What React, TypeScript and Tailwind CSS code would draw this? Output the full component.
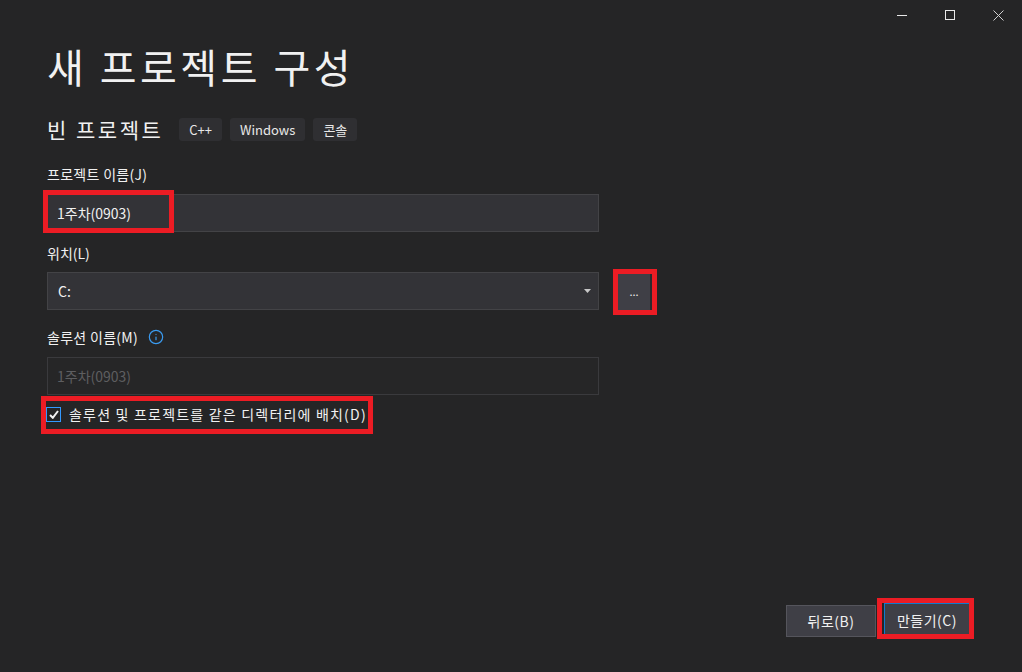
import { Info } from "lucide-react";

const font = "font-['Noto_Sans_CJK_KR','Noto_Sans',sans-serif]";

function RedBox({ className }: { className: string }) {
  return <div className={`absolute border-[5px] border-[#ec1c24] pointer-events-none ${className}`} />;
}

function Chip({ children }: { children: React.ReactNode }) {
  return (
    <span className="h-[23px] px-[10px] flex items-center rounded-[3px] bg-[#2f2f32] text-[13px] text-[#e8e8e8]">
      {children}
    </span>
  );
}

export default function App() {
  return (
    <div className={`relative w-[1022px] h-[672px] bg-[#252526] text-[#f1f1f1] flex flex-col overflow-hidden ${font}`}>
      {/* title bar */}
      <div className="h-[32px] flex justify-end items-start">
        <div className="w-[48px] h-[30px] flex items-center justify-center">
          <div className="w-[10px] h-px bg-[#e8e8e8]" />
        </div>
        <div className="w-[48px] h-[30px] flex items-center justify-center">
          <div className="w-[10px] h-[10px] border border-[#e8e8e8]" />
        </div>
        <div className="w-[48px] h-[30px] flex items-center justify-center">
          <svg width="11" height="11" viewBox="0 0 11 11" stroke="#d0d0d0" strokeWidth="1">
            <path d="M0.5 0.5 L10.5 10.5 M10.5 0.5 L0.5 10.5" />
          </svg>
        </div>
      </div>

      <div className="pl-[47px] flex flex-col">
        <h1 className="text-[40px] leading-none mt-[14px] tracking-[3.5px]">새 프로젝트 구성</h1>

        <div className="flex items-center mt-[32px] h-[23px]">
          <span className="text-[21px] leading-none mr-[16px] tracking-[2.5px]">빈 프로젝트</span>
          <div className="flex gap-[8px]">
            <Chip>C++</Chip>
            <Chip>Windows</Chip>
            <Chip>콘솔</Chip>
          </div>
        </div>

        <label className="text-[14px] leading-none mt-[26px] tracking-[0.3px]">프로젝트 이름(J)</label>
        <div className="relative mt-[13px] w-[552px]">
          <div className="h-[38px] border border-[#434346] bg-[#333337] flex items-center px-[9px] text-[14px]">
            1주차(0903)
          </div>
          <RedBox className="left-[-4px] top-[-4px] w-[131px] h-[43px]" />
        </div>

        <label className="text-[14px] leading-none mt-[14px]">위치(L)</label>
        <div className="flex items-center mt-[12px]">
          <div className="h-[38px] w-[552px] border border-[#434346] bg-[#333337] flex items-center justify-between px-[10px] text-[14px]">
            <span>C:</span>
            <svg width="7" height="4" viewBox="0 0 7 4" className="mr-[-3px]">
              <path d="M0 0 L7 0 L3.5 4 Z" fill="#c8c8c8" />
            </svg>
          </div>
          <div className="relative ml-[19px]">
            <div className="w-[34px] h-[37px] bg-[#3f3f46] border-r-2 border-[#2b2b2e] flex items-center justify-center text-[11px] leading-none pt-[1px]">
              ...
            </div>
            <RedBox className="left-[-5px] top-[-4px] w-[44px] h-[46px]" />
          </div>
        </div>

        <div className="flex items-center mt-[19px]">
          <label className="text-[14px] leading-none tracking-[0.3px]">솔루션 이름(M)</label>
          <Info size={16} strokeWidth={1.8} className="ml-[10px] text-[#3a9bf0]" />
        </div>
        <div className="mt-[12px] h-[38px] w-[552px] border border-[#3a3a3d] bg-[#262627] flex items-center px-[9px] text-[14px] text-[#5e5e60]">
          1주차(0903)
        </div>

        <div className="relative mt-[9px] flex items-center h-[20px]">
          <div className="w-[15px] h-[15px] border border-[#3399ff] flex items-center justify-center -ml-[1px]">
            <svg width="10" height="9" viewBox="0 0 10 9">
              <path d="M1 5 L3.8 7.8 L9 1" stroke="#f1f1f1" strokeWidth="2" fill="none" />
            </svg>
          </div>
          <span className="ml-[8px] text-[14px] leading-none tracking-[1.2px]">솔루션 및 프로젝트를 같은 디렉터리에 배치(D)</span>
          <RedBox className="left-[-6px] top-[-8px] w-[332px] h-[38px]" />
        </div>
      </div>

      <div className="mt-auto mb-[35px] mr-[52px] flex justify-end gap-[8px] items-end">
        <button className="w-[90px] h-[32px] bg-[#3f3f46] border border-[#55555c] text-[14px] text-[#f1f1f1] tracking-[0.5px]">
          뒤로(B)
        </button>
        <div className="relative">
          <button className="w-[86px] h-[34px] bg-[#3f3f46] border border-[#0e7bd0] text-[14px] text-[#f1f1f1] tracking-[0.5px]">
            만들기(C)
          </button>
          <RedBox className="left-[-7px] top-[-5px] w-[97px] h-[41px]" />
        </div>
      </div>
    </div>
  );
}
